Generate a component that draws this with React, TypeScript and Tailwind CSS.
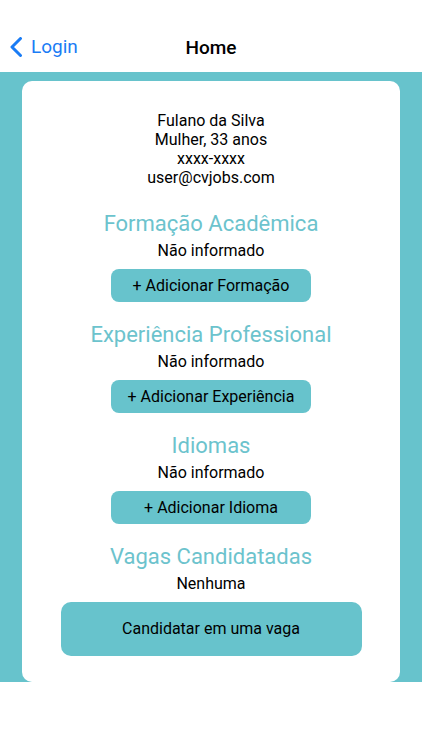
import React from "react";

const SECTIONS = [
  { title: "Formação Acadêmica", empty: "Não informado", action: "+ Adicionar Formação" },
  { title: "Experiência Professional", empty: "Não informado", action: "+ Adicionar Experiência" },
  { title: "Idiomas", empty: "Não informado", action: "+ Adicionar Idioma" },
];

function Section({ title, empty, action }: { title: string; empty: string; action: string }) {
  return (
    <div className="flex flex-col items-center">
      <h2 className="text-[22px] leading-[27px] text-[#6cc3cd]">{title}</h2>
      <p className="mt-[4px] text-[16px] leading-[19px] text-black">{empty}</p>
      <button className="mt-[9px] w-[200px] h-[33px] rounded-[8px] bg-[#67c3cc] text-[16px] text-black">
        {action}
      </button>
    </div>
  );
}

export default function App() {
  return (
    <div className="w-full h-[750px] bg-white flex flex-col" style={{ fontFamily: "Roboto, 'Liberation Sans', sans-serif" }}>
      {/* Nav bar */}
      <header className="h-[72px] shrink-0 relative flex items-end pb-[13px]">
        <button className="absolute left-[9px] top-[37px] flex items-center gap-[8px] text-[#1a7cf5]">
          <svg width="14" height="20" viewBox="0 0 14 20" fill="none">
            <path d="M11.5 1.5 L3 10 L11.5 18.5" stroke="currentColor" strokeWidth="3" strokeLinecap="round" strokeLinejoin="round" />
          </svg>
          <span className="text-[19px] leading-[20px]">Login</span>
        </button>
        <h1 className="w-full text-center text-[19px] leading-[22px] font-medium text-black">Home</h1>
      </header>

      {/* Content */}
      <main className="h-[610px] shrink-0 bg-[#67c3cc] px-[22px] pt-[9px]">
        <div className="h-full bg-white rounded-[10px] flex flex-col items-center pt-[30px]">
          <div className="flex flex-col items-center text-[16px] leading-[19px] text-black">
            <span>Fulano da Silva</span>
            <span>Mulher, 33 anos</span>
            <span>xxxx-xxxx</span>
            <span>user@cvjobs.com</span>
          </div>

          <div className="mt-[23px] flex flex-col items-center gap-[19px]">
            {SECTIONS.map(s => <Section key={s.title} {...s} />)}

            <div className="flex flex-col items-center">
              <h2 className="text-[22px] leading-[27px] text-[#6cc3cd]">Vagas Candidatadas</h2>
              <p className="mt-[4px] text-[16px] leading-[19px] text-black">Nenhuma</p>
              <button className="mt-[9px] w-[301px] h-[54px] rounded-[10px] bg-[#67c3cc] text-[16px] text-black">
                Candidatar em uma vaga
              </button>
            </div>
          </div>
        </div>
      </main>
    </div>
  );
}
